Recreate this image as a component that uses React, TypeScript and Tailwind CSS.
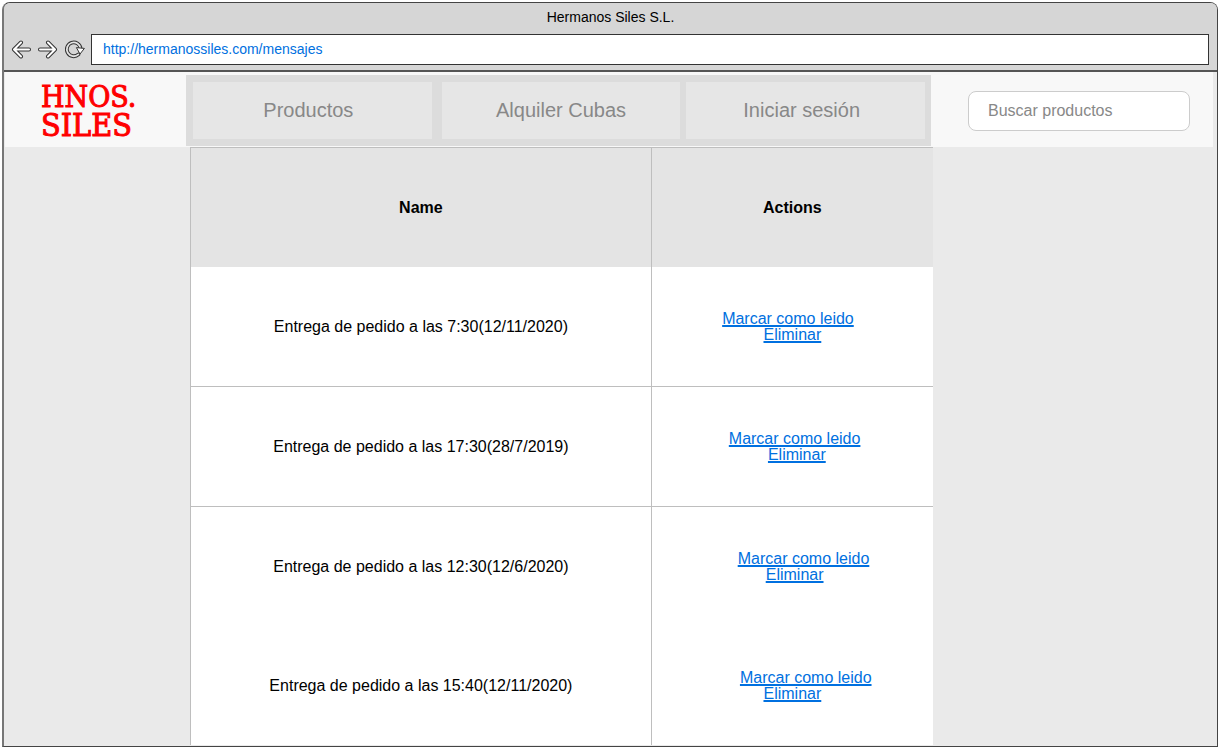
import React from "react";

type Message = { title: string; read: string; remove: string; divided: boolean };

const NB = "\u00a0";

const messages: Message[] = [
  { title: "Entrega de pedido a las 7:30(12/11/2020)", read: "Marcar como leido|" + NB + NB, remove: "Eliminar", divided: true },
  { title: "Entrega de pedido a las 17:30(28/7/2019)", read: NB + "|Marcar como leido", remove: NB + NB + "|Eliminar", divided: true },
  { title: "Entrega de pedido a las 12:30(12/6/2020)", read: NB.repeat(5) + "|Marcar como leido", remove: NB + "|Eliminar", divided: false },
  { title: "Entrega de pedido a las 15:40(12/11/2020)", read: NB.repeat(6) + "|Marcar como leido", remove: "Eliminar", divided: false },
];

/* A bar separates the link text from the blanks around it. */
function ActionLine({ text }: { text: string }) {
  return (
    <div>
      {text.split("|").map((part, i) =>
        part.trim() ? (
          <a key={i} href="#" className="text-[#0070e0] underline decoration-2 underline-offset-1">
            {part}
          </a>
        ) : (
          <span key={i}>{part}</span>
        ),
      )}
    </div>
  );
}

function ArrowIcon({ flip = false }: { flip?: boolean }) {
  const d = "M18 9.5H3.5M10 2.5L3 9.5L10 16.5";
  return (
    <svg width="20" height="19" viewBox="0 0 20 19" fill="none" strokeLinecap="round" strokeLinejoin="round" className={flip ? "-scale-x-100" : ""}>
      <path d={d} stroke="#333" strokeWidth="4" />
      <path d={d} stroke="#fff" strokeWidth="2" />
    </svg>
  );
}

function ReloadIcon() {
  const arc = "M13.4 14.4A6.9 6.9 0 1 1 15.6 8.6";
  return (
    <svg width="20" height="19" viewBox="0 0 20 19" fill="none">
      <path d={arc} stroke="#333" strokeWidth="3.8" strokeLinecap="round" />
      <path d={arc} stroke="#e4e4e4" strokeWidth="1.8" strokeLinecap="round" />
      <path d="M11.4 7.6L19.4 8.4L15 14Z" fill="#fff" stroke="#333" strokeWidth="1" strokeLinejoin="round" />
    </svg>
  );
}

function BrowserBar() {
  return (
    <div className="rounded-t-md border-b-2 border-[#555] bg-[#d6d6d6]">
      <div className="pt-1 text-center text-sm leading-5 text-black">Hermanos Siles S.L.</div>
      <div className="flex items-center pt-[7px] pr-2 pb-[5px] pl-[7px]">
        <div className="flex gap-[7px] pr-[6px]">
          <button aria-label="Atrás"><ArrowIcon /></button>
          <button aria-label="Adelante"><ArrowIcon flip /></button>
          <button aria-label="Recargar"><ReloadIcon /></button>
        </div>
        <input
          aria-label="Dirección"
          defaultValue="http://hermanossiles.com/mensajes"
          className="h-[31px] min-w-0 flex-1 border border-[#333] bg-white px-[11px] pb-[2px] text-sm text-[#0070e0] outline-none"
        />
      </div>
    </div>
  );
}

function SiteHeader() {
  const item = "flex h-[57px] flex-1 items-center justify-center bg-[#e6e6e6] pb-[2px] text-xl text-[#888]";
  return (
    <header className="mr-1 ml-px grid grid-cols-[181fr_745fr_282fr] bg-[#f8f8f8] pt-[3px] pb-px">
      <a
        href="#"
        className="flex flex-col justify-center pl-[36px] font-['DejaVu_Serif_Condensed','DejaVu_Serif',serif] text-[#ff0000] [-webkit-text-stroke:1px_#ff0000]"
      >
        <span className="text-[30px] leading-[29px]">HNOS.</span>
        <span className="text-[32px] leading-[29px]">SILES</span>
      </a>
      <nav className="flex bg-[#dcdcdc] py-[7px] pr-[6px] pl-[7px]">
        <a href="#" className={item + " pr-2"}>Productos</a>
        <a href="#" className={item + " mr-[6px] ml-[10px] px-1"}>Alquiler Cubas</a>
        <a href="#" className={item + " pr-2"}>Iniciar sesión</a>
      </nav>
      <div className="flex items-center pr-[23px] pl-[37px]">
        <input
          type="search"
          aria-label="Buscar productos"
          placeholder="Buscar productos"
          className="h-10 w-full min-w-0 rounded-lg border border-[#ccc] bg-white px-[19px] text-base outline-none placeholder:text-[#888]"
        />
      </div>
    </header>
  );
}

function MessageTable() {
  return (
    <table className="w-full table-fixed border-separate border-spacing-0 border-l border-[#bebebe] bg-white text-base text-black">
      <colgroup>
        <col className="w-[62.1%]" />
        <col />
      </colgroup>
      <thead>
        <tr className="h-30 bg-[#e4e4e4]">
          <th className="border-t border-r border-[#bebebe] p-0 font-bold">Name</th>
          <th className="border-t border-[#bebebe] p-0 font-bold">Actions</th>
        </tr>
      </thead>
      <tbody>
        {messages.map((m) => {
          const line = m.divided ? " border-b" : "";
          return (
            <tr key={m.title} className={m.divided ? "h-30" : "h-[119px]"}>
              <td className={"border-r border-[#bebebe] p-0 text-center" + line}>{m.title}</td>
              <td className={"border-[#bebebe] p-0 text-center leading-4" + line}>
                <ActionLine text={m.read} />
                <ActionLine text={m.remove} />
              </td>
            </tr>
          );
        })}
      </tbody>
    </table>
  );
}

export default function App() {
  return (
    <div className="flex min-h-screen flex-col bg-white pt-[2px] pr-[2px] pb-px pl-[2px] font-['Liberation_Sans',Arial,sans-serif]">
      <div className="flex flex-1 flex-col rounded-t-lg border border-l-2 border-[#444] border-l-[#777] bg-[#eaeaea]">
        <BrowserBar />
        <SiteHeader />
        <main className="grid grid-cols-[186fr_743fr_284fr]">
          <div className="col-start-2">
            <MessageTable />
          </div>
        </main>
      </div>
    </div>
  );
}
